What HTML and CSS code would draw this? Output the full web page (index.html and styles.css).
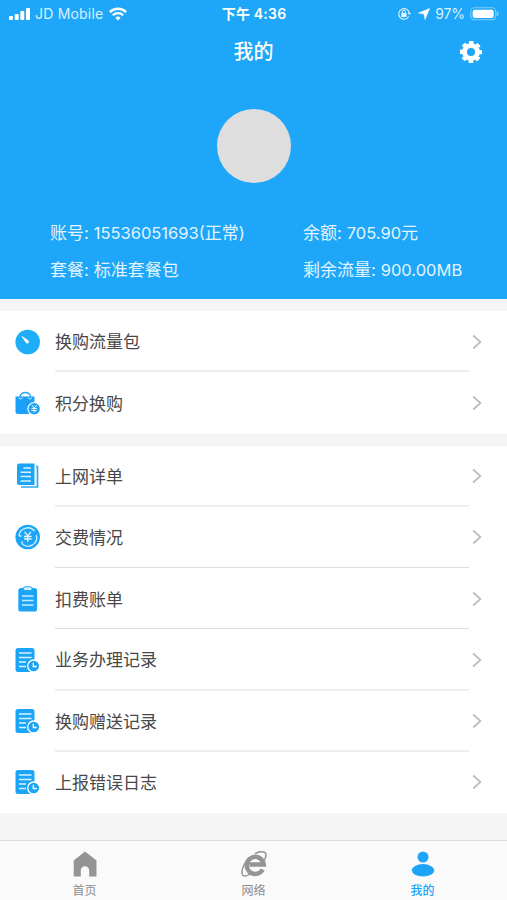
FILE: index.html
```html
<!DOCTYPE html>
<html lang="zh-CN">
<head>
<meta charset="utf-8">
<meta name="viewport" content="width=device-width, initial-scale=1">
<title>我的</title>
<link rel="stylesheet" href="styles.css">
</head>
<body>
<svg class="defs" aria-hidden="true">
  <symbol id="chevron" viewBox="0 0 10 16"><path d="M1.2 1.5 8.4 8 1.2 14.5" fill="none" stroke="#bdbdbd" stroke-width="1.8"/></symbol>
  <symbol id="record" viewBox="0 0 26 26">
    <path d="M3 1h14a2.500 2.500 0 0 1 2.500 2.500V25H3a2.500 2.500 0 0 1-2.500-2.500v-19A2.500 2.500 0 0 1 3 1Z" fill="#1ca5f7"/>
    <path d="M4 6h12.500M4 10.500h12.500M4 15h7M4 19.500h7" stroke="#d8f1ff" stroke-width="1.500"/>
    <circle cx="18.700" cy="19" r="6" fill="#1ca5f7" stroke="#fff" stroke-width="1.300"/>
    <path d="M18.300 15.700v3.800h3.400" fill="none" stroke="#fff" stroke-width="1.300"/>
  </symbol>
</svg>
<main class="screen">
  <header class="hero">
    <div class="status">
      <div class="status-left">
        <svg width="23" height="14" viewBox="0 0 23 14" fill="#fff"><rect x="1" y="9" width="4" height="4" rx="1"/><rect x="6.700" y="7" width="4" height="6" rx="1"/><rect x="12.300" y="4" width="4" height="9" rx="1"/><rect x="18" y="1" width="4" height="12" rx="1"/></svg>
        <span class="carrier">JD Mobile</span>
        <svg width="18" height="14" viewBox="0 0 18 14" fill="none" stroke="#fff" stroke-width="2.300"><path d="M.8 5.100a11.700 11.700 0 0 1 16.400 0M3.800 8.200a7.400 7.400 0 0 1 10.400 0"/><path d="M6.300 10.700a3.900 3.900 0 0 1 5.400 0L9 13.500Z" fill="#fff" stroke="none"/></svg>
      </div>
      <div class="time">下午 4:36</div>
      <div class="status-right">
        <svg width="14" height="14" viewBox="0 0 14 14"><path d="M11.700 9.500A5.300 5.300 0 1 1 12.300 6.300" fill="none" stroke="#d4efff" stroke-width="1.200"/><path d="m10.600 6 1.700 2L14 6Z" fill="#d4efff"/><rect x="4.300" y="6" width="5.200" height="4" rx=".5" fill="#e8f6ff"/><path d="M5.400 6V4.800a1.500 1.500 0 0 1 3 0V6" fill="none" stroke="#e8f6ff"/></svg>
        <svg class="locate" width="12" height="12" viewBox="0 0 12 12"><path d="M11.700.4 7 11.600 6 6 .4 5Z" fill="#fff" stroke="#fff" stroke-width=".5" stroke-linejoin="round"/></svg>
        <span class="percent">97%</span>
        <svg class="battery" width="30" height="14" viewBox="0 0 30 14"><rect x=".8" y=".8" width="25" height="12" rx="3.600" fill="none" stroke="#7dccfb" stroke-width="1.100"/><rect x="2.700" y="2.700" width="21" height="8.200" rx="2" fill="#fff"/><path d="M27.300 4.800q2 2-0 4Z" fill="#83cffb" stroke="#83cffb"/></svg>
      </div>
    </div>
    <div class="titlebar">
      <h1>我的</h1>
      <svg class="gear" width="24" height="24" viewBox="0 0 24 24"><circle cx="12" cy="12" r="6.500" fill="none" stroke="#fff" stroke-width="5"/><circle cx="12" cy="12" r="9.300" fill="none" stroke="#fff" stroke-width="3.600" stroke-dasharray="4.300 3.004" stroke-dashoffset="2.150" stroke-linecap="butt"/></svg>
    </div>
    <div class="avatar"></div>
    <div class="facts">
      <div>账号: <span class="num account">15536051693(</span>正常<span class="num">)</span></div>
      <div>余额: <span class="num">705.90</span>元</div>
      <div>套餐: <span class="offset">标准套餐包</span></div>
      <div>剩余流量: <span class="num">900.00MB</span></div>
    </div>
  </header>

  <section class="card">
    <div class="row">
      <svg class="icon" viewBox="0 0 26 26"><circle cx="12.700" cy="13" r="12.300" fill="#1eadf8"/><path d="m7 7.500 6.500 4.500a1.500 1.500 0 0 1-2 2Z" fill="#fff" stroke="#fff" stroke-width=".8"/></svg>
      <div class="label thick">换购流量包</div><svg class="go"><use href="#chevron"/></svg>
    </div>
    <div class="row">
      <svg class="icon" viewBox="0 0 26 26"><path d="M5 7V6a5.500 5 0 0 1 10.500 0v1" fill="none" stroke="#2ba9f6" stroke-width="1.300"/><path d="M.5 6.500h19V24H3a2.500 2.500 0 0 1-2.500-2.500Z" fill="#1ca0f7"/><path d="M3.500 8q2 2 4 0M13 8q2 2 4 0" fill="none" stroke="#bfe6ff"/><circle cx="19.200" cy="18.800" r="6.300" fill="#1ca5f7" stroke="#fff" stroke-width="1.200"/><path d="m16.700 15 2.500 3 2.500-3M16.500 18.500h5.400M16.500 20.500h5.400M19.200 18v4.500" fill="none" stroke="#e7f7ff"/></svg>
      <div class="label">积分换购</div><svg class="go"><use href="#chevron"/></svg>
    </div>
  </section>

  <section class="card">
    <div class="row">
      <svg class="icon" viewBox="0 0 26 26"><path d="M21 3.500h1.500V24H6" fill="none" stroke="#2baaf5" stroke-width="1.700"/><path d="M4 .5h15.500V22H4a2 2 0 0 1-2-2V2.500a2 2 0 0 1 2-2Z" fill="#1ca5f7"/><path d="M8.500 5H16M5.500 9.300H16M5.500 13.500H16M5.500 18H16" stroke="#d5f0ff" stroke-width="1.600"/></svg>
      <div class="label thick">上网详单</div><svg class="go"><use href="#chevron"/></svg>
    </div>
    <div class="row">
      <svg class="icon" viewBox="0 0 26 26"><circle cx="12.700" cy="13" r="12.300" fill="#1ca5f7"/><path d="M4 12a8.800 8.800 0 0 1 15.500-5M21.300 11A8.700 8.700 0 0 1 7 19.800M4 12h2.700M7 19.800v-2.500" fill="none" stroke="#c8ebff" stroke-width="1.400"/><path d="m9.500 7.800 3.200 4 3.200-4M9 12.500h7.500M9 15h7.500M12.700 12v5.800" fill="none" stroke="#e7f7ff" stroke-width="1.300"/></svg>
      <div class="label">交费情况</div><svg class="go"><use href="#chevron"/></svg>
    </div>
    <div class="row">
      <svg class="icon" viewBox="0 0 26 26"><rect x="3.300" y="2" width="18.800" height="23.500" rx="2.600" fill="#1ca5f7"/><rect x="8.500" y=".8" width="8.500" height="3.700" rx="1.500" fill="#d8f1ff" stroke="#1ca5f7"/><path d="M7 10h11.500M7 14.500h11.500M7 19h11.500" stroke="#c8ebff" stroke-width="1.500"/></svg>
      <div class="label">扣费账单</div><svg class="go"><use href="#chevron"/></svg>
    </div>
    <div class="row">
      <svg class="icon"><use href="#record"/></svg>
      <div class="label thick">业务办理记录</div><svg class="go"><use href="#chevron"/></svg>
    </div>
    <div class="row">
      <svg class="icon"><use href="#record"/></svg>
      <div class="label thick">换购赠送记录</div><svg class="go"><use href="#chevron"/></svg>
    </div>
    <div class="row">
      <svg class="icon"><use href="#record"/></svg>
      <div class="label">上报错误日志</div><svg class="go"><use href="#chevron"/></svg>
    </div>
  </section>

  <nav class="tabs">
    <div class="tab"><svg width="26" height="26" viewBox="0 0 26 26"><path d="M13 .5 24.500 9.500V25.500h-7.300v-6a4.200 4.200 0 0 0-8.400 0v6H1.700v-16Z" fill="#949494"/></svg><span>首页</span></div>
    <div class="tab"><svg width="26" height="26" viewBox="0 0 26 26" fill="none" stroke="#949494"><path d="M21.700 18.500a8.500 8.500 0 1 1 1-5H8.500" stroke-width="4.500"/><path d="M14 2.500C20-.5 25 .5 25 4q0 2-1.500 5M5.500 10C1 16 0 22 2 24.500c2 1.500 5 0 8-1.800" stroke-width="1.500"/></svg><span>网络</span></div>
    <div class="tab active"><svg width="26" height="26" viewBox="0 0 26 26" fill="#1ca5f7"><circle cx="13" cy="6" r="5.500"/><ellipse cx="13" cy="19.300" rx="11.200" ry="6.200"/></svg><span>我的</span></div>
  </nav>
</main>
</body>
</html>
```

FILE: styles.css
```css
* { box-sizing: border-box; }

body {
  margin: 0;
  background: #f5f5f5;
  color: #484848;
  font-family: Inter, "Noto Sans CJK SC", sans-serif;
}

svg { display: block; flex: none; }
.defs { display: none; }

.screen {
  width: 507px;
  height: 900px;
  display: flex;
  flex-direction: column;
  overflow: hidden;
}

.hero {
  height: 299px;
  flex: none;
  background: #1ea6f8;
  color: #fff;
}

.status {
  height: 28px;
  padding: 0 7px 0 8px;
  display: grid;
  grid-template-columns: 1fr auto 1fr;
  align-items: center;
  font-size: 14px;
  line-height: 20px;
}
.status-left, .status-right { display: flex; align-items: center; }
.status-left { color: #d9f1ff; }
.status-right { justify-content: flex-end; color: #d9f1ff; }
.carrier { margin: 0 6px 0 4px; letter-spacing: 0.2px; }
.time { font-weight: 600; letter-spacing: 0.2px; }
.locate { margin-left: 7px; }
.percent { margin: 0 5px; letter-spacing: -0.1px; }

.titlebar {
  height: 48px;
  padding: 0 24px;
  display: grid;
  grid-template-columns: 1fr auto 1fr;
  align-items: center;
}
.titlebar h1 {
  grid-column: 2;
  margin: 0;
  font-size: 20px;
  line-height: 28px;
  font-weight: 500;
}
.gear { justify-self: end; }

.avatar {
  width: 74px;
  height: 74px;
  margin: 33px auto 0;
  border-radius: 50%;
  background: #dedede;
}

.facts {
  margin-top: 31px;
  padding-left: 50px;
  display: grid;
  grid-template-columns: 253px 1fr;
  grid-auto-rows: 37px;
  align-items: center;
  color: #e2f4ff;
  font-size: 17px;
  line-height: 24px;
  white-space: nowrap;
}
.num { font-size: 16.500px; }

.card {
  margin-top: 12px;
  background: #fff;
}
.row {
  height: 61.250px;
  padding-left: 15px;
  display: flex;
  align-items: center;
}
.icon { width: 26px; height: 26px; }
.label {
  width: 414px;
  height: 100%;
  margin-left: 14px;
  display: flex;
  align-items: center;
  border-bottom: 1px solid #dddddd;
  font-size: 17px;
}
.label.thick { border-bottom: 2px solid #eeeeee; }
.row:last-child .label { border-bottom-color: transparent; }
.go { width: 10px; height: 16px; margin-left: 3px; }

.tabs {
  height: 60px;
  margin-top: auto;
  display: grid;
  grid-template-columns: repeat(3, 1fr);
  border-top: 1px solid #dedede;
  background: #fafafa;
}
.tab {
  padding-top: 10px;
  display: flex;
  flex-direction: column;
  align-items: center;
  gap: 6px;
  color: #8c8c8c;
  font-size: 12px;
  line-height: 16px;
}
.tab.active { color: #1ca5f7; font-weight: 500; }
```
